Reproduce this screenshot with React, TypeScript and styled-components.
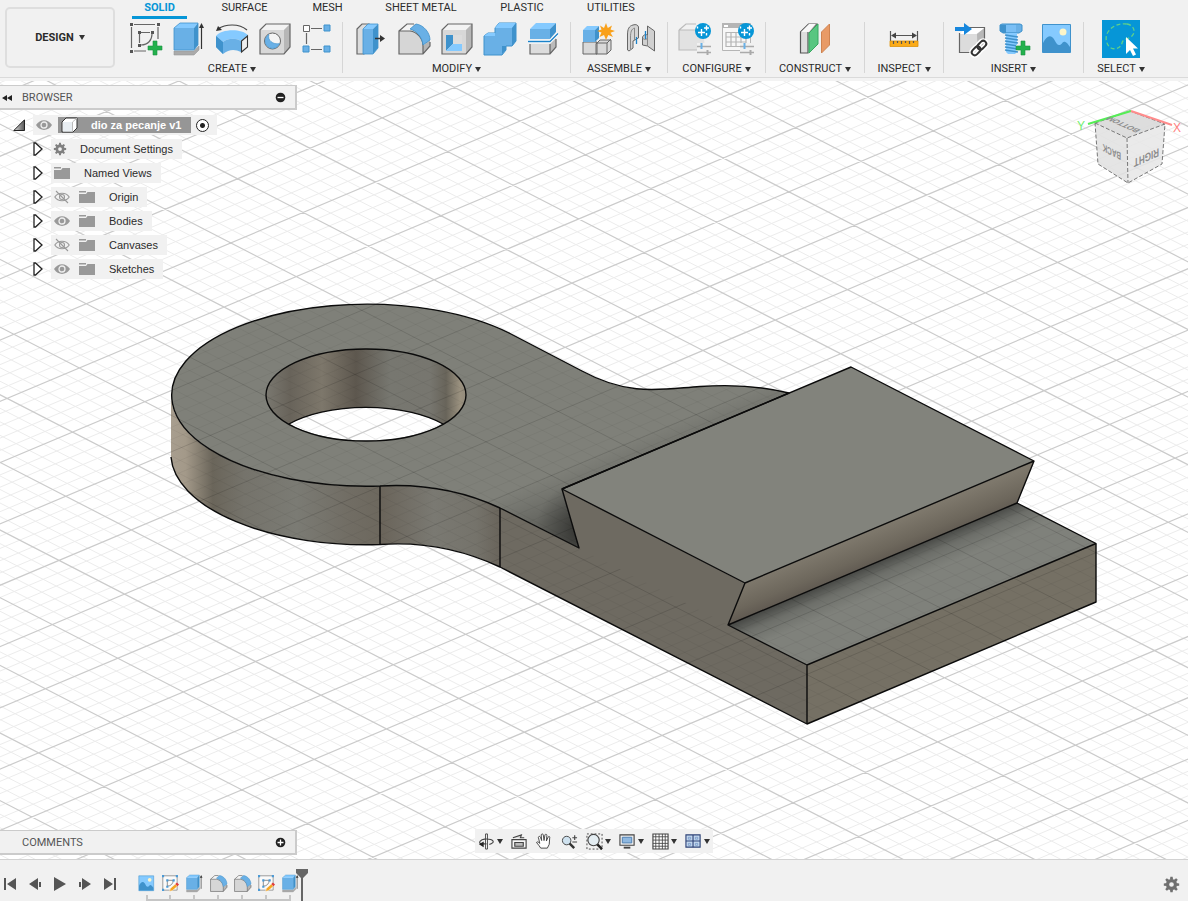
import React from "react";
import styled, { createGlobalStyle } from "styled-components";

const Global = createGlobalStyle`
  * { box-sizing: border-box; }
  html, body { margin: 0; padding: 0; }
  body { background: #f1f1f1; color: #2b2b2b; font: 11px/14px Roboto, "Liberation Sans", sans-serif; }
  button { font: inherit; color: inherit; background: none; border: 0; padding: 0; margin: 0; }
  svg { display: block; }
`;

/* ---------- layout ---------- */

const Page = styled.div`
  display: flex;
  flex-direction: column;
  min-height: 100vh;
`;

const Header = styled.header`
  display: flex;
  height: 81px;
  overflow: hidden;
  background: linear-gradient(#f1f1f1 77px, #dadada 77px, #dadada 78px, #f3f3f3 78px);
`;

const WorkspaceButton = styled.button`
  display: flex;
  align-items: center;
  justify-content: center;
  gap: 5px;
  flex: none;
  width: 110px;
  height: 61px;
  margin: 7px 7px 0 5px;
  border: 2px solid #dedede;
  border-radius: 5px;
  font-weight: 700;
`;

const Ribbon = styled.div`
  flex: 1;
  min-width: 0;
`;

const Tabs = styled.nav`
  display: flex;
  gap: 22px;
  padding-left: 10px;
  margin-bottom: 1px;
`;

const Tab = styled.button<{ $active?: boolean; $width: number }>`
  flex: none;
  width: ${(p) => p.$width}px;
  height: 19px;
  white-space: nowrap;
  border-bottom: 3px solid ${(p) => (p.$active ? "#0696d7" : "transparent")};
  color: ${(p) => (p.$active ? "#0696d7" : "#2b2b2b")};
  font-weight: ${(p) => (p.$active ? 700 : 400)};
`;

const Groups = styled.div`
  display: flex;
`;

const Group = styled.section<{ $width: number }>`
  display: flex;
  flex-direction: column;
  align-items: center;
  flex: none;
  width: ${(p) => p.$width}px;
`;

const Separator = styled.div`
  flex: none;
  width: 1px;
  height: 51px;
  margin-top: 2px;
  background: #d6d6d6;
`;

const Tools = styled.div`
  display: flex;
  align-items: center;
  gap: 11px;
  height: 38px;
`;

const ToolButton = styled.button<{ $selected?: boolean }>`
  padding: ${(p) => (p.$selected ? 3 : 0)}px;
  background: ${(p) => (p.$selected ? "#0696d7" : "none")};
`;

const GroupLabel = styled.button`
  display: flex;
  align-items: center;
  gap: 3px;
  margin-top: 4px;
`;

const Viewport = styled.main`
  position: relative;
  flex: 1;
  display: flex;
  flex-direction: column;
  justify-content: space-between;
  padding: 4px 0;
  background: #fff;
  overflow: hidden;
`;

const Scene = styled.svg`
  position: absolute;
  inset: 0;
  width: 100%;
  height: 100%;
`;

const Overlay = styled.div`
  position: relative;
  display: flex;
  justify-content: space-between;
  align-items: flex-start;
`;

const Panel = styled.div`
  width: 297px;
`;

const PanelBar = styled.div`
  display: flex;
  align-items: center;
  width: 297px;
  height: 25px;
  padding: 1px 9px 0 2px;
  background: #f1f1f1;
  border: solid #cbcbcb;
  border-width: 1px 2px 2px 0;
  color: #555;
`;

const PanelTitle = styled.h2`
  flex: 1;
  margin: 0 0 0 8px;
  font-size: 11px;
  font-weight: 400;
`;

const Spacer = styled.span`
  width: 12px;
`;

const Tree = styled.ul`
  list-style: none;
  margin: 0;
  padding: 3px 0 0;
  font-family: "Liberation Sans", Arial, sans-serif;
`;

const Row = styled.li<{ $root?: boolean }>`
  display: flex;
  align-items: center;
  gap: 8px;
  height: 24px;
  padding-left: ${(p) => (p.$root ? 13 : 33)}px;
`;

const RowBody = styled.div`
  display: flex;
  align-items: center;
  gap: 9px;
  height: 20px;
  padding: 0 9px 0 3px;
  background: #f1f1f1;
`;

const RootBody = styled(RowBody)`
  gap: 6px;
  padding: 0 8px 0 3px;
`;

const RowLabel = styled.span`
  margin-left: 5px;
  white-space: nowrap;
`;

const Selected = styled.span`
  display: flex;
  align-items: center;
  gap: 13px;
  height: 16px;
  padding: 0 10px 0 3px;
  background: #969696;
  color: #fff;
  font-weight: 700;
  white-space: nowrap;
`;

const ActiveRadio = styled.input`
  appearance: none;
  width: 13px;
  height: 13px;
  margin: 0 0 0 -1px;
  border: 1px solid #222;
  border-radius: 50%;
  background: radial-gradient(circle, #222 0 2px, #fff 3px);
`;

const CubeBox = styled.div`
  width: 120px;
  margin: 15px 0 0;
`;

const BottomRow = styled(Overlay)`
  justify-content: flex-start;
  gap: 178px;
`;

const NavBar = styled.div`
  display: flex;
  align-items: center;
  gap: 8px;
  height: 24px;
  margin-top: -1px;
  padding: 0 3px;
  background: #f1f1f1;
`;

const NavButton = styled.button`
  display: flex;
  align-items: center;
  gap: 2px;
`;

const Footer = styled.footer`
  display: flex;
  height: 42px;
  border-top: 1px solid #d2d2d2;
  background: #f1f1f1;
`;

const Playback = styled.div`
  display: flex;
  align-items: center;
  gap: 9px;
  height: 48px;
  padding: 0 16px 0 2px;
`;

const Timeline = styled.div`
  display: flex;
  padding: 15px 0 0;
`;

const Feature = styled.button<{ $first?: boolean; $last?: boolean }>`
  display: flex;
  flex-direction: column;
  align-items: center;
  width: 24px;
  height: 26px;

  &::after {
    content: "";
    align-self: stretch;
    height: 6px;
    margin: 3px ${(p) => (p.$last ? 11 : 0)}px 0 ${(p) => (p.$first ? 12 : 0)}px;
    border-bottom: 2px solid #c6c6c6;
    background: linear-gradient(#c6c6c6, #c6c6c6) ${(p) => (p.$first ? "0" : p.$last ? "100%" : "50%")} 0 / 2px 6px no-repeat;
  }
`;

const Marker = styled.div`
  margin: 9px 0 0 -6px;
`;

const SettingsButton = styled.button`
  height: 48px;
  margin-left: auto;
  padding: 0 9px;
`;

/* ---------- icons ---------- */

const B = "#69b0e6";
const L = "#85caff";
const D = "#3f92cc";
const G = "#666";

const Caret = () => (
  <svg width="6" height="5" viewBox="0 0 6 5"><path d="M0 0h6L3 5z" fill="#333" /></svg>
);

type IconProps = { size?: number; children?: React.ReactNode };
const Box = ({ size = 32, children }: IconProps) => (
  <svg width={size} height={size} viewBox="0 0 32 32" fill="none" overflow="visible">{children}</svg>
);

const Plus = ({ x, y }: { x: number; y: number }) => (
  <path transform={`translate(${x} ${y})`} d="M-2-7h4v5h5v4h-5v5h-4v-5h-5v-4h5z" fill="#23b14d" stroke="#1b9040" strokeWidth=".6" />
);

const SketchBase = () => (
  <>
    <path d="M4 1.500h21M1.500 4v21M4 28h12M28 4v12M11 9.500h9M9.500 11v9M22 11c0 6-4 11-11 11" stroke={G} strokeWidth="1.200" />
    <path d="M0 0h3v3H0zM27 0h3v3h-3zM0 27h3v3H0zM8 8h3v3H8zM21 8h3v3h-3zM8 21h3v3H8z" fill="#555" />
  </>
);

const SketchIcon = () => <Box><SketchBase /><Plus x={25} y={25} /></Box>;

const SketchPencilIcon = ({ size }: IconProps) => (
  <Box size={size}>
    <path d="M1.500 1.500h27v27h-27z" fill="#fafafa" stroke="#888" strokeWidth="1.500" />
    <path d="M10 10h11c0 6-4 11-11 11z" stroke="#777" strokeWidth="1.500" />
    <path d="M0 0h4v4H0zM26 0h4v4h-4zM0 26h4v4H0zM8 8h4v4H8zM20 8h4v4h-4zM8 20h4v4H8z" fill="#4a9ad6" />
    <path d="M14 31l2-6L25 17l4 4L20 29z" fill="#f5a623" stroke="#fff" strokeWidth=".8" />
    <path d="M25 17l3-3 4 4-3 3z" fill="#e03c3c" />
  </Box>
);

const ExtrudeIcon = ({ size }: IconProps) => (
  <Box size={size}>
    <path d="M1 28h20l5-5v4l-5 5H1z" fill="#aaa" stroke="#999" strokeWidth=".6" />
    <path d="M1 5h20v22H1z" fill={B} />
    <path d="M1 5l6-5h18l-4 5z" fill={L} />
    <path d="M21 5l4-5v22l-4 5z" fill={D} />
    <path d="M1 27V5l6-5h18v22l-4 5z" stroke={D} strokeWidth=".8" />
    <path d="M28.500 3v23" stroke="#333" strokeWidth="1.200" />
    <path d="M26 5l2.500-5L31 5z" fill="#333" />
  </Box>
);

const RevolveIcon = () => (
  <Box>
    <path d="M0 13C5 6 25 5 32 12l-7 6c-5-3-13-3-18 1z" fill={L} />
    <path d="M0 13l7 6c5-4 13-4 18-1v11c-6-3-12-3-18 2l-7-7z" fill={B} />
    <path d="M0 13l7 6v12l-7-7z" fill={D} />
    <path d="M25.500 18l6-5v11l-6 5z" fill="#eee" stroke="#333" strokeWidth="1.100" />
    <path d="M2 6C9 1 23 0 31 7" stroke="#444" strokeWidth="1.200" />
    <path d="M0 8l2-5 4 4z" fill="#333" />
  </Box>
);

const BlockShape = () => (
  <>
    <path d="M1 7l6-6h24v23l-6 7H1z" fill="#d8d8d8" />
    <path d="M1 7l6-6h24l-6 6z" fill="#f3f3f3" />
    <path d="M25 7l6-6v23l-6 7z" fill="#b7b7b7" />
    <path d="M1 7l6-6h24v23l-6 7H1z" stroke={G} strokeWidth="1.200" />
  </>
);

const HoleIcon = () => (
  <Box>
    <BlockShape />
    <circle cx="13.500" cy="18" r="8" fill="#f5f5f5" stroke={G} />
    <path d="M10 11.500a7.400 7.400 0 1 0 10.500 9C14 22 8 17 10 11.500z" fill={B} stroke={D} strokeWidth=".6" />
  </Box>
);

const PatternIcon = () => (
  <Box>
    <path d="M9 5.500h11M4.500 10v11M9 26.500h11" stroke={G} strokeWidth="1.200" />
    <path d="M1.500 2.500h6v6h-6z" fill="#fff" stroke={G} />
    <path d="M22 2h6v6h-6zM1 23h6v6H1zM22 23h6v6h-6z" fill={B} stroke={D} />
  </Box>
);

const PressPullIcon = () => (
  <Box>
    <path d="M2 6l5-5h7l-5 30H2z" fill="#dcdcdc" stroke={G} strokeWidth="1.200" />
    <path d="M8 6h10v25H8z" fill={B} />
    <path d="M8 6l5-5h10l-5 5z" fill={L} />
    <path d="M18 6l5-5v24l-5 6z" fill={D} />
    <path d="M8 31V6l5-5h10v24l-5 6z" stroke={D} strokeWidth=".8" />
    <path d="M20 15.500h7" stroke="#333" strokeWidth="1.500" />
    <path d="M25 12l5 3.500-5 3.500z" fill="#333" />
  </Box>
);

const FilletIcon = ({ size }: IconProps) => (
  <Box size={size}>
    <path d="M1 8l8-7h9c7 1 14 8 14 16v6l-7 8H1z" fill="#d6d6d6" />
    <path d="M1 8l8-7h7l-4 7z" fill="#f4f4f4" />
    <path d="M25 23l7-6v6l-7 8z" fill="#b5b5b5" />
    <path d="M1 8l8-7h7M32 19v4l-7 8H1V8h11c7 1 13 7 13 15v8" stroke={G} strokeWidth="1.200" />
    <path d="M12 6l6-5c8 1 14 9 14 16l-7 5C24 14 19 8 12 6z" fill={B} stroke={D} strokeWidth=".8" />
  </Box>
);

const ShellIcon = () => (
  <Box>
    <BlockShape />
    <path d="M5 12h16v16H5z" fill="#fff" />
    <path d="M5 12h7v9l-7 7z" fill={D} />
    <path d="M12 21h9v7H5z" fill={L} />
    <path d="M12 12h9v9h-9z" fill="#ddd" />
  </Box>
);

const CombineIcon = () => (
  <Box>
    <path d="M0 13l4-3h7V5l4-5h17v18l-4 5h-6v4l-4 5H0z" fill={B} stroke={D} />
    <path d="M11 5l4-5h17l-4 5z" fill={L} />
    <path d="M28 5l4-5v18l-4 5z" fill={D} />
    <path d="M0 13l4-3h7v3z" fill={L} />
    <path d="M18 23h4v4l-4 4z" fill={D} />
  </Box>
);

const SplitIcon = () => (
  <Box>
    <path d="M3 21h20v10H3z" fill="#dcdcdc" />
    <path d="M23 21l6-6v9l-6 7z" fill="#bbb" />
    <path d="M3 21v10h20l6-7v-8M23 21v10" stroke={G} strokeWidth="1.200" />
    <path d="M3 6h20v10H3z" fill={B} />
    <path d="M3 6l6-6h20l-6 6z" fill={L} />
    <path d="M23 6l6-6v9l-6 7z" fill={D} />
    <path d="M1 18.500h22l8-8" stroke="#fff" strokeWidth="3" />
    <path d="M1 18.500h22l8-8" stroke="#1b82c9" strokeWidth="1.300" />
  </Box>
);

const NewComponentIcon = () => (
  <Box>
    <path d="M1 19h14v12H1zM14 21l4-4h11v10l-4 4H14z" fill="#d9d9d9" stroke={G} />
    <path d="M13.500 20h11.500v11M25 20l4-4" stroke={G} />
    <path d="M1 7h12v12H1z" fill={B} />
    <path d="M1 7l4-4h12l-4 4z" fill={L} />
    <path d="M13 7l4-4v12l-4 4z" fill={D} />
    <path d="M24 0l1.800 5L30 2.500 28.500 6.500 33 8l-4.500 1.800L31 14l-4.700-2L24 17l-2-5-4.500 2 2-4.500L15 8l4.500-1.500L18 2.500 22 5z" fill="#f9a11b" />
  </Box>
);

const JointIcon = () => (
  <Box>
    <path d="M2.500 12C2.500 6 4 3 8 2c3-1 5 0 5.500 2v11l-5.500 3v7l-4 3-1.500-1z" fill="#d5d5d5" stroke={G} />
    <path d="M5.500 26V14c0-5 1-8 4-9v12" stroke="#888" />
    <path d="M29.500 28V8l-7-5v9c-2-1-5 0-5 3v7l5 1z" fill="#d0d0d0" stroke={G} />
    <path d="M22.500 12v11M17.500 15c1.500 2 4 2 5 0" stroke="#888" />
    <path d="M11.500 14v7M20.500 8v8" stroke="#1b82c9" strokeWidth="1.300" />
  </Box>
);

const Sliders = () => (
  <>
    <path d="M18 20h14v12H18z" fill="#f1f1f1" />
    <path d="M18 23.500h14M18 29.500h14" stroke="#aaa" strokeWidth="1.500" />
    <path d="M22.500 20v6" stroke={B} strokeWidth="2" />
    <path d="M28.500 27v5" stroke="#aaa" strokeWidth="2" />
  </>
);

const Sparkle = () => (
  <>
    <circle cx="24" cy="8" r="8" fill="#0696d7" />
    <path d="M22.500 6v7M19 9.500h7M27.500 2.500v5M25 5h5M18.500 3.500v2M27.500 10v2.500" stroke="#fff" strokeWidth="1.400" />
  </>
);

const ConfigureIcon = () => (
  <Box>
    <path d="M0 7h24l2 18-3 2H0z" fill="#e2e2e2" />
    <path d="M0 7l7-6h10M0 7v20h24M0 7h18" stroke="#bbb" strokeWidth="1.200" />
    <Sliders /><Sparkle />
  </Box>
);

const TableIcon = () => (
  <Box>
    <path d="M.500.500h28v27H.500z" fill="#f7f7f7" stroke="#b5b5b5" />
    <path d="M0 0h28v5H0z" fill="#b5b5b5" />
    <path d="M2 2h4v2H2z" fill="#fff" />
    <path d="M4 9.500h20v14H4zM4 14h20M4 19h20M9 9v14M14 9v14M19 9v14" stroke="#b5b5b5" strokeWidth="1.200" />
    <Sliders /><Sparkle />
  </Box>
);

const PlaneIcon = () => (
  <Box>
    <path d="M1.500 9l8-8h8L9 9v21H1.500z" fill="#dedede" stroke="#555" strokeWidth="1.200" />
    <path d="M2 9l8-8h7l-7 8z" fill="#f8f8f8" />
    <path d="M10 10l9-9v20l-9 9z" fill="#59c681" stroke="#38a860" />
    <path d="M22.500 9l8-8v21l-8 8z" fill="#e89a66" stroke="#cf8350" />
  </Box>
);

const MeasureIcon = () => (
  <Box>
    <path d="M2.500 8v10M29.500 8v10M5 12.500h22" stroke="#555" strokeWidth="1.200" />
    <path d="M3 12.500l5-3v6zM29 12.500l-5-3v6z" fill="#444" />
    <path d="M2 18h28v5.500H2z" fill="#fbab18" stroke="#dd9209" strokeWidth=".8" />
    <path d="M5.500 18v3M9.500 18v2M13.500 18v3M17.500 18v2M21.500 18v3M25.500 18v2" stroke="#555" strokeWidth="1.200" />
  </Box>
);

const DeriveIcon = () => (
  <Box>
    <path d="M4.500 11l6-6h19v16l-6 9h-19z" fill="#dcdcdc" />
    <path d="M4.500 11l6-6h19l-8 6z" fill="#fff" />
    <path d="M22 11l7.500-6v16l-7 8z" fill="#b7b7b7" />
    <path d="M10 4.500h19.500V20M4.500 10v19.500H18" stroke={G} strokeWidth="1.200" />
    <path d="M0 4h9V0l8 6-8 6V8H0z" fill="#1787dd" />
    <g transform="rotate(-45 24 25)" stroke="#fff" strokeWidth="5"><rect x="15" y="22" width="10" height="6" rx="3" /><rect x="23" y="22" width="10" height="6" rx="3" /></g>
    <g transform="rotate(-45 24 25)" stroke="#333" strokeWidth="2"><rect x="15" y="22" width="10" height="6" rx="3" /><rect x="23" y="22" width="10" height="6" rx="3" /></g>
  </Box>
);

const BoltIcon = () => (
  <Box>
    <path d="M2 2l2-1h18l2 1v6l-3 2H5L2 8z" fill={B} stroke={D} />
    <path d="M2 2h6v8H5L2 8z" fill={D} /><path d="M8 2h10v7H8z" fill={L} opacity=".6" />
    <path d="M8 10h11v19l-2 2h-7l-2-2z" fill={L} />
    <path d="M7 12l13 2M7 15l13 2M7 18l13 2M7 21l13 2M7 24l13 2M7 27l13 2" stroke={D} strokeWidth="1.300" />
    <path d="M22 18h5v4h4v6h-4v4h-5v-4h-4v-6h4z" fill="#f1f1f1" />
    <Plus x={25} y={25} />
  </Box>
);

const PictureIcon = ({ size }: IconProps) => (
  <Box size={size}>
    <path d="M1.500 1.500h28v28h-28z" fill={L} stroke={D} strokeWidth="1" />
    <path d="M2 20c3-6 6-8 9-6s4 8 7 8c4 0 3-6 8-2l3 4v5H2z" fill={D} />
    <circle cx="22" cy="9" r="3.500" fill="#fdf5c9" />
  </Box>
);

const SelectIcon = () => (
  <Box>
    <path d="M22 1C29 2 31 9 27 13s-9 2-10 7-7 7-11 5S-1 15 3 9 14 0 22 1z" stroke="#5fd08a" strokeWidth="1.300" strokeDasharray="4 2.500" />
    <path d="M21 14v17l4-4 3 6 3-1.500-3-6h5z" fill="#fff" />
  </Box>
);

const Eye = ({ off }: { off?: boolean }) => (
  <svg width="16" height="14" viewBox="0 0 16 14" fill="none">
    {off ? (
      <g stroke="#999" strokeWidth="1.100">
        <path d="M.800 7C4 2 12 2 15.200 7 12 12 4 12 .800 7z" /><circle cx="8" cy="7" r="2.500" /><path d="M2 1l12 12" />
      </g>
    ) : (
      <>
        <path d="M0 7C4 .500 12 .500 16 7 12 13.500 4 13.500 0 7z" fill="#999" />
        <circle cx="8" cy="7" r="3" fill="#999" stroke="#eee" strokeWidth="1.300" />
      </>
    )}
  </svg>
);

const Folder = () => (
  <svg width="16" height="14" viewBox="0 0 16 14"><path d="M0 1h7v1.500H0zM0 4h7l1.500-2H16v11H0z" fill="#999" /></svg>
);

const Gear = ({ size, color = "#707070" }: { size: number; color?: string }) => (
  <svg width={size} height={size} viewBox="-8 -8 16 16" overflow="visible">
    <circle r="4.200" fill="none" stroke={color} strokeWidth="3.400" />
    {[0, 45, 90, 135, 180, 225, 270, 315].map((a) => (
      <path key={a} d="M-1.700-5h3.400L1.200-8.200h-2.400z" fill={color} transform={`rotate(${a})`} />
    ))}
  </svg>
);

const Expander = () => (
  <svg width="10" height="14" viewBox="0 0 10 14"><path d="M1 1h1.500L9 7l-6.500 6H1z" fill="#fff" stroke="#222" strokeWidth="1.300" /></svg>
);

const RootExpander = () => (
  <svg width="12" height="12" viewBox="0 0 12 12">
    <defs><linearGradient id="rootTri"><stop offset="0" stopColor="#ddd" /><stop offset="1" stopColor="#555" /></linearGradient></defs>
    <path d="M11.500.800v10.700H.800z" fill="url(#rootTri)" stroke="#222" />
  </svg>
);

const ComponentCube = () => (
  <svg width="17" height="16" viewBox="0 0 17 16"><path d="M1 5l4-4h11v10l-4 4H1z" fill="#fff" stroke="#333" /><path d="M2 5h9v9.500H2z" fill="#e9eef2" /><path d="M11.500 5L16 1M11.500 5v10" stroke="#bbb" /></svg>
);

const RoundToggle = ({ plus }: { plus?: boolean }) => (
  <svg width="11" height="11" viewBox="0 0 11 11"><circle cx="5.500" cy="5.500" r="4.800" fill="#222" /><path d={plus ? "M2.500 5.500h6M5.500 2.500v6" : "M2.500 5.500h6"} stroke="#fff" strokeWidth="1.300" /></svg>
);

const Nav = ({ children }: { children: React.ReactNode }) => (
  <svg width="17" height="17" viewBox="0 0 18 18" fill="none" stroke="#444" strokeWidth="1.200">{children}</svg>
);

const navItems: { name: string; menu?: boolean; icon: React.ReactNode }[] = [
  { name: "Orbit", menu: true, icon: <Nav><path d="M8 1h2v16H8z" fill="#fff" strokeWidth="1" /><path d="M16 10c1-3-5-4-9-3.500S0 10 3 11.500h6M12 12c2 0 3-1 4-2" /><path d="M1 12l5-3v6z" fill="#222" stroke="none" /></Nav> },
  { name: "Look At", icon: <Nav><path d="M1 7h15v9H1z" fill="#f8f8f8" /><path d="M4 10h9v4H4z" fill="#bbb" /><path d="M2 5l9-3-1 3h4" fill="#ddd" /></Nav> },
  { name: "Pan", icon: <Nav><path d="M5 16c-1-2-3-4-4.500-6 1-1.500 2.500 0 3.500 1L2.500 4.500c.5-1.500 2-1 2.200 0L6 8 5.500 2c.5-1.500 2-1.200 2.200 0L8.500 8l1-6c.5-1.200 2-.8 2 .5L11 8.500l2-4.500c1-.8 2 0 1.500 1.200L14 12l-2 4z" fill="#fff" strokeWidth="1" /></Nav> },
  { name: "Zoom", icon: <Nav><circle cx="6" cy="8" r="4.500" fill="#cfe2ef" strokeWidth="1" /><path d="M9 11l5 5" strokeWidth="2.500" stroke="#333" /><path d="M12 5h5M14.500 2.500v5M12 9.500h5" /></Nav> },
  { name: "Fit", menu: true, icon: <Nav><path d="M1 1h16v16H1z" strokeDasharray="2 2" strokeWidth="1" /><circle cx="8" cy="7.500" r="6" fill="#e4edf2" /><path d="M12 12l5 5" strokeWidth="2.600" stroke="#222" /></Nav> },
  { name: "Display Settings", menu: true, icon: <Nav><path d="M1 2h15v11H1z" fill="#eee" /><path d="M3.500 4.500h10v6h-10z" fill="#8fb8e0" stroke="#4b7db0" strokeWidth="1" /><path d="M5 15.500h7" strokeWidth="2" /></Nav> },
  { name: "Grid and Snaps", menu: true, icon: <Nav><path d="M1 1h16v16H1z" fill="#fff" /><path d="M4 1v16M7.500 1v16M11 1v16M14 1v16M1 4h16M1 7.500h16M1 11h16M1 14h16" strokeWidth=".9" /></Nav> },
  { name: "Viewports", menu: true, icon: <Nav><path d="M1 2h15v13H1z" fill="#c4d8ee" stroke="#2f4478" /><path d="M8.500 2v13M1 8.500h15" stroke="#2f4478" /><path d="M3.500 4.500H6v2H3.500zM11 4.500h2.500v2H11zM3.500 11H6v2H3.500zM11 11h2.500v2H11z" stroke="#6f93c4" strokeWidth=".8" /></Nav> },
];

const playItems = [
  { name: "Go to start", d: "M2 2h2v12H2zM14 2v12L5 8z" },
  { name: "Step back", d: "M11 2v12L2 8zM12 6h2v5h-2z" },
  { name: "Play", d: "M2 1l12 7-12 7z" },
  { name: "Step forward", d: "M5 2v12l9-6zM2 6h2v5H2z" },
  { name: "Go to end", d: "M14 2h-2v12h2zM2 2v12l9-6z" },
];

const featureItems = [
  { name: "Canvas", Icon: PictureIcon },
  { name: "Sketch1", Icon: SketchPencilIcon },
  { name: "Extrude1", Icon: ExtrudeIcon },
  { name: "Fillet1", Icon: FilletIcon },
  { name: "Fillet2", Icon: FilletIcon },
  { name: "Sketch2", Icon: SketchPencilIcon },
  { name: "Extrude2", Icon: ExtrudeIcon },
];

const tabItems = [
  { name: "SOLID", width: 55 },
  { name: "SURFACE", width: 71 },
  { name: "MESH", width: 51 },
  { name: "SHEET METAL", width: 92 },
  { name: "PLASTIC", width: 66 },
  { name: "UTILITIES", width: 68 },
];

const groupItems: { name: string; width: number; tools: [string, React.FC][] }[] = [
  { name: "CREATE", width: 220, tools: [["Create Sketch", SketchIcon], ["Extrude", ExtrudeIcon], ["Revolve", RevolveIcon], ["Hole", HoleIcon], ["Pattern", PatternIcon]] },
  { name: "MODIFY", width: 227, tools: [["Press Pull", PressPullIcon], ["Fillet", FilletIcon], ["Shell", ShellIcon], ["Combine", CombineIcon], ["Split Body", SplitIcon]] },
  { name: "ASSEMBLE", width: 96, tools: [["New Component", NewComponentIcon], ["Joint", JointIcon]] },
  { name: "CONFIGURE", width: 97, tools: [["Configure", ConfigureIcon], ["Configuration Table", TableIcon]] },
  { name: "CONSTRUCT", width: 98, tools: [["Offset Plane", PlaneIcon]] },
  { name: "INSPECT", width: 78, tools: [["Measure", MeasureIcon]] },
  { name: "INSERT", width: 139, tools: [["Insert Derive", DeriveIcon], ["Insert Fastener", BoltIcon], ["Canvas", PictureIcon]] },
  { name: "SELECT", width: 74, tools: [["Select", SelectIcon]] },
];

/* ---------- model ---------- */

const ORIGIN = [913, 323.3];
const U = [72.3, -30.45];
const V = [65.5, 33.7];

const at = (a: number, b: number) =>
  `${(ORIGIN[0] + a * U[0] + b * V[0]).toFixed(2)} ${(ORIGIN[1] + a * U[1] + b * V[1]).toFixed(2)}`;

const gridPath = (major: boolean) => {
  let d = "";
  for (let i = -110; i <= 110; i++) {
    if ((i % 5 === 0) !== major) continue;
    const k = i / 5;
    d += `M${at(k, -24)}L${at(k, 24)}M${at(-24, k)}L${at(24, k)}`;
  }
  return d;
};
const MAJOR = gridPath(true);
const MINOR = gridPath(false);

const NECK = "C415 484 455 487 500 508";
const TOP = `M380 486A195 91 0 1 1 510 333.500L582 371C630 397 662 389 700 386.500C735 384 765 387 789 393L562 489L579 548L500 508C455 487 415 484 380 486z`;
const LENS = "M289 424A100 46 0 0 1 443 424A100 46 0 0 1 289 424z";
const CYL = "M171 395A195 91 0 0 0 380 486V544.500A195 91 0 0 1 171 457z";
const NECK_SIDE = `M380 486${NECK}V567C455 546 415 542 380 544.500z`;
const FRONT = "M500 508L579 548L562 489L745 583L728 625L807 665V724L500 567z";
const RIGHT = "M807 665L1096 543.500V602L807 724z";
const STEP = "M728 625L1017 503L1096 543.500L807 665z";

const Model = () => (
  <Scene aria-label="Part model">
    <defs>
      <linearGradient id="cyl" gradientUnits="userSpaceOnUse" x1="171" x2="380" y1="0" y2="0">
        <stop offset="0" stopColor="#a89e8f" /><stop offset=".07" stopColor="#a39989" /><stop offset=".2" stopColor="#6a655a" />
        <stop offset=".35" stopColor="#75736b" /><stop offset=".6" stopColor="#7b7b74" /><stop offset=".85" stopColor="#716d64" /><stop offset="1" stopColor="#6d685e" />
      </linearGradient>
      <linearGradient id="neck" gradientUnits="userSpaceOnUse" x1="380" x2="500" y1="0" y2="0">
        <stop offset="0" stopColor="#6a645a" /><stop offset=".45" stopColor="#7a7972" /><stop offset=".8" stopColor="#75736b" /><stop offset="1" stopColor="#69645b" />
      </linearGradient>
      <linearGradient id="bore" gradientUnits="userSpaceOnUse" x1="266" x2="466" y1="0" y2="0">
        <stop offset="0" stopColor="#7a7870" /><stop offset=".12" stopColor="#68635a" /><stop offset=".28" stopColor="#7d776b" /><stop offset=".45" stopColor="#5d574e" />
        <stop offset=".62" stopColor="#777770" /><stop offset=".82" stopColor="#77766f" /><stop offset=".9" stopColor="#68645a" /><stop offset=".97" stopColor="#9a917f" /><stop offset="1" stopColor="#938b7c" />
      </linearGradient>
      <linearGradient id="over" gradientUnits="userSpaceOnUse" x1="745" y1="583" x2="761" y2="622">
        <stop offset="0" stopColor="#7e786c" /><stop offset=".5" stopColor="#6d675c" /><stop offset="1" stopColor="#554e48" />
      </linearGradient>
      <linearGradient id="stepShade" gradientUnits="userSpaceOnUse" x1="728" y1="625" x2="740" y2="653">
        <stop offset="0" stopColor="#000" stopOpacity=".45" /><stop offset=".45" stopColor="#000" stopOpacity=".14" /><stop offset="1" stopColor="#000" stopOpacity="0" />
      </linearGradient>
      <linearGradient id="topShade" gradientUnits="userSpaceOnUse" x1="579" y1="548" x2="548" y2="474">
        <stop offset="0" stopColor="#000" stopOpacity=".3" /><stop offset=".45" stopColor="#000" stopOpacity=".22" /><stop offset=".8" stopColor="#000" stopOpacity=".07" /><stop offset="1" stopColor="#000" stopOpacity="0" />
      </linearGradient>
      <radialGradient id="cornerShade" gradientUnits="userSpaceOnUse" cx="582" cy="528" r="46">
        <stop offset="0" stopColor="#000" stopOpacity=".5" /><stop offset=".4" stopColor="#000" stopOpacity=".28" /><stop offset="1" stopColor="#000" stopOpacity="0" />
      </radialGradient>
      <clipPath id="ghost">
        <path clipRule="evenodd" d={`${TOP}${LENS}`} /><path d={`${CYL}${NECK_SIDE}${RIGHT}${STEP}`} />
        <path d="M500 508L807 665V724L500 567z" />
      </clipPath>
    </defs>
    <g transform="translate(0 -81)" fill="none">
      <path d={MINOR} stroke="#ececec" />
      <path d={MAJOR} stroke="#cbcbcb" strokeWidth="1.200" />
      <path d={CYL} fill="url(#cyl)" />
      <path d={NECK_SIDE} fill="url(#neck)" />
      <path d={`${TOP}${LENS}`} fill="#7f8079" fillRule="evenodd" />
      <g clipPath="url(#ghost)">
        <path d={TOP} fill="url(#topShade)" />
        <path d={TOP} fill="url(#cornerShade)" />
      </g>
      <path d="M289 424A100 46 0 1 1 443 424A100 46 0 0 0 289 424z" fill="url(#bore)" />
      <path d={FRONT} fill="#6e6a61" />
      <path d={RIGHT} fill="#757064" />
      <path d={STEP} fill="#7f817b" />
      <path d={STEP} fill="url(#stepShade)" />
      <g clipPath="url(#ghost)" stroke="#000">
        <path d={MINOR} strokeOpacity=".045" />
        <path d={MAJOR} strokeOpacity=".13" />
      </g>
      <path d="M745 583L1034 461L1017 503L728 625z" fill="url(#over)" />
      <path d="M562 489L851 367L1034 461L745 583z" fill="#82837c" />
      <g stroke="#0b0b0b" strokeWidth="1.400" strokeLinejoin="round">
        <path d={TOP} />
        <ellipse cx="366" cy="395" rx="100" ry="46" />
        <path d="M289 424A100 46 0 0 1 443 424" />
        <path d="M171 457A195 91 0 0 0 380 544.500C415 542 455 546 500 567L807 724L1096 602V543.500L1017 503" />
        <path d="M380 486V544.500M500 508V567M562 489L745 583L728 625L807 665V724M562 489L851 367L1034 461L745 583M1034 461L1017 503L728 625M807 665L1096 543.500" />
      </g>
    </g>
  </Scene>
);

const ViewCube = () => (
  <svg width="120" height="90" viewBox="1068 100 120 90" fontFamily='"Liberation Sans", sans-serif' fontWeight="700" fill="none" role="img" aria-label="View cube">
    <path d="M1095 123L1130 111L1165 124L1127 138z" fill="#d9d9d9" fillOpacity=".9" />
    <path d="M1095 123L1127 138L1128 183L1098 164z" fill="#e0e0e0" fillOpacity=".85" />
    <path d="M1127 138L1165 124L1162 164L1128 183z" fill="#e6e6e6" fillOpacity=".85" />
    <path d="M1095 123L1127 138L1165 124L1162 164L1128 183L1098 164zM1127 138L1128 183M1095 123L1130 111L1165 124" stroke="#777" strokeDasharray="4 2" />
    <path d="M1088 124L1131 111" stroke="#55ee55" strokeWidth="2" />
    <path d="M1131 111L1172 125" stroke="#ff8c8c" strokeWidth="2" />
    <g fill="#8c8c8c">
      <text transform="matrix(-.8 -.4 0 -1.300 1121 153)" fontSize="8">BACK</text>
      <text transform="matrix(-.9 .4 0 -1.300 1159 148)" fontSize="9">RIGHT</text>
      <text transform="matrix(-.9 -.4 .9 -.5 1141 130)" fontSize="8">BOTTOM</text>
    </g>
    <text x="1077" y="130" fontSize="12" fontWeight="400" fill="#6fee6f">Y</text>
    <text x="1173" y="132" fontSize="12" fontWeight="400" fill="#ff7f7f">X</text>
  </svg>
);

const treeItems: { name: string; eye?: "on" | "off"; gear?: boolean }[] = [
  { name: "Document Settings", gear: true },
  { name: "Named Views" },
  { name: "Origin", eye: "off" },
  { name: "Bodies", eye: "on" },
  { name: "Canvases", eye: "off" },
  { name: "Sketches", eye: "on" },
];

export default function App() {
  return (
    <Page>
      <Global />
      <Header>
        <WorkspaceButton>DESIGN <Caret /></WorkspaceButton>
        <Ribbon>
          <Tabs>
            {tabItems.map((t, i) => <Tab key={t.name} $width={t.width} $active={i === 0}>{t.name}</Tab>)}
          </Tabs>
          <Groups>
            {groupItems.map((g, i) => (
              <React.Fragment key={g.name}>
                {i > 0 && <Separator />}
                <Group $width={g.width}>
                  <Tools>
                    {g.tools.map(([name, Icon]) => (
                      <ToolButton key={name} aria-label={name} $selected={name === "Select"}><Icon /></ToolButton>
                    ))}
                  </Tools>
                  <GroupLabel>{g.name} <Caret /></GroupLabel>
                </Group>
              </React.Fragment>
            ))}
          </Groups>
        </Ribbon>
      </Header>

      <Viewport>
        <Model />
        <Overlay>
          <Panel>
            <PanelBar>
              <button aria-label="Collapse browser"><svg width="12" height="8" viewBox="0 0 12 8"><path d="M5 1v6L0 4zM10 1v6L5 4z" fill="#222" /></svg></button>
              <PanelTitle>BROWSER</PanelTitle>
              <button aria-label="Minimize browser"><RoundToggle /></button>
            </PanelBar>
            <Tree>
              <Row $root>
                <button aria-label="Collapse"><RootExpander /></button>
                <RootBody>
                  <button aria-label="Hide component"><Eye /></button>
                  <Selected><ComponentCube />dio za pecanje v1</Selected>
                  <ActiveRadio type="radio" name="active" aria-label="Activate component" defaultChecked />
                </RootBody>
              </Row>
              {treeItems.map((t) => (
                <Row key={t.name}>
                  <button aria-label={`Expand ${t.name}`}><Expander /></button>
                  <RowBody>
                    {t.eye && <button aria-label={`Toggle ${t.name}`}><Eye off={t.eye === "off"} /></button>}
                    {t.gear ? <Gear size={12} color="#808080" /> : <Folder />}
                    <RowLabel>{t.name}</RowLabel>
                  </RowBody>
                </Row>
              ))}
            </Tree>
          </Panel>
          <CubeBox><ViewCube /></CubeBox>
        </Overlay>
        <BottomRow>
          <PanelBar>
            <Spacer />
            <PanelTitle>COMMENTS</PanelTitle>
            <button aria-label="Expand comments"><RoundToggle plus /></button>
          </PanelBar>
          <NavBar>
            {navItems.map((n) => (
              <NavButton key={n.name} aria-label={n.name}>{n.icon}{n.menu && <Caret />}</NavButton>
            ))}
          </NavBar>
        </BottomRow>
      </Viewport>

      <Footer>
        <Playback>
          {playItems.map((p) => (
            <button key={p.name} aria-label={p.name}><svg width="16" height="16" viewBox="0 0 16 16"><path d={p.d} fill="#555" /></svg></button>
          ))}
        </Playback>
        <Timeline>
          {featureItems.map(({ name, Icon }, i) => (
            <Feature key={name} aria-label={name} $first={i === 0} $last={i === featureItems.length - 1}><Icon size={17} /></Feature>
          ))}
        </Timeline>
        <Marker><svg width="12" height="32" viewBox="0 0 12 32"><path d="M0 0h12v4L7 9v23H5V9L0 4z" fill="#666" /></svg></Marker>
        <SettingsButton aria-label="Settings"><Gear size={15} /></SettingsButton>
      </Footer>
    </Page>
  );
}
